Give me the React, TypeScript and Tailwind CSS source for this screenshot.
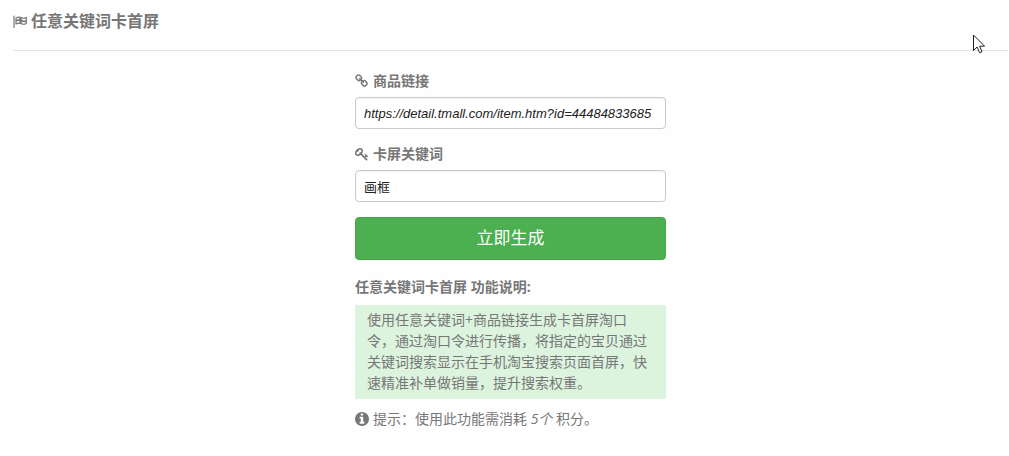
import { useState } from 'react';
import type { ReactNode } from 'react';

const LINK_PATH =
  'M1456 1216q0-40-28-68l-208-208q-28-28-68-28-42 0-72 32 3 3 19 18.500t21.500 21.500 15 19 13 25.500 3.500 27.500q0 40-28 68t-68 28q-15 0-27.500-3.500t-25.500-13-19-15-21.500-21.500-18.500-19q-33 31-33 73 0 40 28 68l206 207q27 27 68 27 40 0 68-26l147-146q28-28 28-67zm-703-705q0-40-28-68l-206-207q-28-28-68-28-39 0-68 27l-147 146q-28 28-28 67 0 40 28 68l208 208q27 27 68 27 42 0 72-31-3-3-19-18.500t-21.500-21.500-15-19-13-25.500-3.500-27.500q0-40 28-68t68-28q15 0 27.500 3.500t25.500 13 19 15 21.500 21.500 18.500 19q33-31 33-73zm895 705q0 120-85 203l-147 146q-83 83-203 83-121 0-204-85l-206-207q-83-83-83-203 0-123 88-209l-88-88q-86 88-208 88-120 0-204-84l-208-208q-84-84-84-204t85-203l147-146q83-83 203-83 121 0 204 85l206 207q83 83 83 203 0 123-88 209l88 88q86-88 208-88 120 0 204 84l208 208q84 84 84 204z';

const KEY_PATH =
  'M832 512q0-80-56-136t-136-56-136 56-56 136q0 42 19 83-41-19-83-19-80 0-136 56t-56 136 56 136 136 56 136-56 56-136q0-42-19-83 41 19 83 19 80 0 136-56t56-136zm851 704q0 17-49 66t-66 49q-9 0-28.500-16t-36.500-33-38.500-40-24.500-26l-96 96 220 220q28 28 28 68 0 42-39 81t-81 39q-40 0-68-28l-671-671q-176 131-365 131-163 0-265.500-102.500t-102.500-265.500q0-160 95-313t248-248 313-95q163 0 265.500 102.500t102.500 265.500q0 189-131 365l355 355 96-96q-3-3-26-24.500t-40-38.500-33-36.500-16-28.500q0-17 49-66t66-49q13 0 23 10 6 6 46 44.500t82 79.500 86.500 86 73 78 28.500 41z';

const INFO_PATH =
  'M1024 1376v-160q0-14-9-23t-23-9h-96v-512q0-14-9-23t-23-9h-320q-14 0-23 9t-9 23v160q0 14 9 23t23 9h96v320h-96q-14 0-23 9t-9 23v160q0 14 9 23t23 9h448q14 0 23-9t9-23zM896 480v-160q0-14-9-23t-23-9h-192q-14 0-23 9t-9 23v160q0 14 9 23t23 9h192q14 0 23-9t9-23zM1536 896q0 209-103 385.500t-279.500 279.500-385.500 103-385.500-103-279.500-279.500-103-385.500 103-385.500 279.500-279.500 385.500-103 385.500 103 279.500 279.500 103 385.500z';

function Icon({ path, viewBox = '0 0 1792 1792' }: { path: string; viewBox?: string }) {
  return (
    <svg className="w-3.5 h-3.5 shrink-0" viewBox={viewBox} fill="currentColor" fillRule="evenodd" aria-hidden="true">
      <path d={path} />
    </svg>
  );
}

function FlagIcon() {
  return (
    <svg className="w-3.5 h-3.5 shrink-0" viewBox="0 0 14 14" fill="none" aria-hidden="true">
      <path d="M1 2v11.500" stroke="currentColor" strokeWidth="1.200" strokeLinecap="round" />
      <path
        d="M3 4c2-1.200 3.800-1.200 5.500-.3s3 .8 4.800-.2v6c-1.800 1-3.300 1-4.800.2s-3.500-.9-5.500.3z"
        stroke="currentColor"
        strokeWidth="1.200"
        strokeLinejoin="round"
      />
      <path
        d="M3 6c1.200-.7 2.200-1 3.400-1v-2l2.400.8v2c1.400.8 2.800.8 4.200.1v1.800c-1.400.7-2.800.7-4.200-.1v2l-2.400-.8v-2c-1.200 0-2.200.4-3.400 1z"
        fill="currentColor"
      />
    </svg>
  );
}

function Field({ id, icon, label, children }: { id: string; icon: string; label: string; children: ReactNode }) {
  return (
    <div className="mb-3.5">
      <label htmlFor={id} className="flex items-center gap-1 mb-1.5 font-bold">
        <Icon path={icon} />
        {label}
      </label>
      {children}
    </div>
  );
}

const inputClass =
  "block w-full h-8 px-2 rounded border border-[#c8cbc8] bg-white text-[13px] text-[#222] shadow-[inset_0_1px_1px_rgba(0,0,0,0.05)] outline-none focus:border-[#4cae4c] font-['Liberation_Sans','Noto_Sans_CJK_SC',sans-serif]";

export default function App() {
  const [url, setUrl] = useState('https://detail.tmall.com/item.htm?id=44484833685');
  const [keyword, setKeyword] = useState('画框');

  return (
    <div className="min-h-screen bg-[#fefefe] pl-[13px] pr-px pt-2.5 text-sm leading-[21px] text-[#777] font-['Open_Sans','Noto_Sans_CJK_SC',sans-serif]">
      <header className="pb-[18px] border-b border-[#e3e3e3]">
        <h1 className="flex items-center gap-1 text-base leading-[22px] font-bold">
          <FlagIcon />
          任意关键词卡首屏
        </h1>
      </header>

      <main className="w-full max-w-[311px] mx-auto pt-[19px]">
        <form onSubmit={(e) => e.preventDefault()}>
          <Field id="url" icon={LINK_PATH} label="商品链接">
            <input
              id="url"
              type="text"
              value={url}
              onChange={(e) => setUrl(e.target.value)}
              className={`${inputClass} italic`}
            />
          </Field>
          <Field id="keyword" icon={KEY_PATH} label="卡屏关键词">
            <input
              id="keyword"
              type="text"
              value={keyword}
              onChange={(e) => setKeyword(e.target.value)}
              className={inputClass}
            />
          </Field>
          <button
            type="submit"
            className="block w-full h-[43px] mt-[15px] pb-0.5 rounded border border-[#45a549] bg-[#4caf50] hover:bg-[#449d48] text-[17px] text-white cursor-pointer"
          >
            立即生成
          </button>
        </form>

        <h2 className="mt-4 mb-2 font-bold">任意关键词卡首屏 功能说明:</h2>
        <p className="px-3 pt-1 pb-1.5 bg-[#dcf3de]">
          使用任意关键词+商品链接生成卡首屏淘口令，通过淘口令进行传播，将指定的宝贝通过关键词搜索显示在手机淘宝搜索页面首屏，快速精准补单做销量，提升搜索权重。
        </p>
        <p className="flex items-center gap-1 mt-[9px]">
          <Icon path={INFO_PATH} viewBox="0 128 1536 1536" />
          <span>
            提示：使用此功能需消耗 <em>5个</em> 积分。
          </span>
        </p>
      </main>

      {/* mouse pointer */}
      <svg className="absolute left-[973px] top-[34px] w-3 h-5" viewBox="0 0 12 20" aria-hidden="true">
        <path
          d="M0.5 1v15.500l3.600-3.500 2.500 5.700 2.400-1-2.400-5.500h5z"
          fill="#fff"
          stroke="#222"
          strokeWidth="1"
          strokeLinejoin="round"
        />
      </svg>
    </div>
  );
}
